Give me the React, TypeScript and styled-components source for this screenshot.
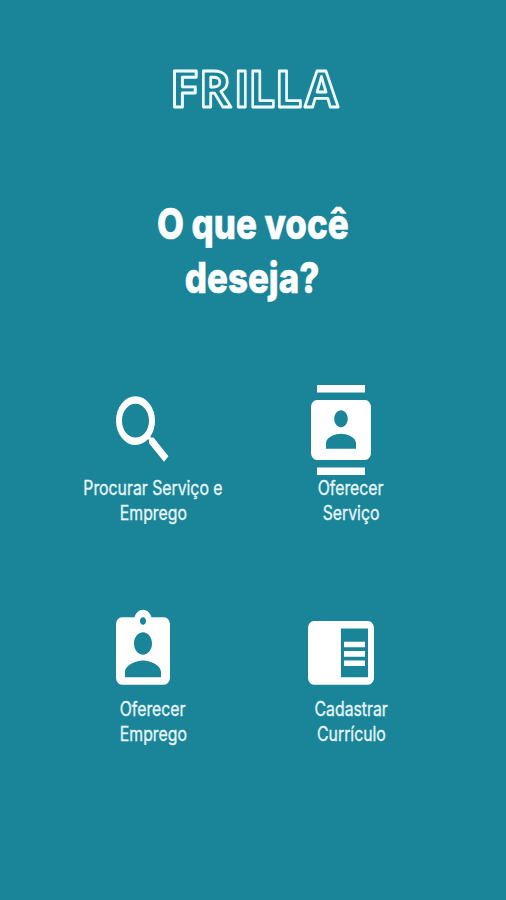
import React from "react";
import styled, { createGlobalStyle } from "styled-components";
import type { IconType } from "react-icons";
import { MdSearch, MdContacts, MdAssignmentInd, MdChromeReaderMode } from "react-icons/md";

const GlobalStyle = createGlobalStyle`
  body {
    margin: 0;
    background: #1a8599;
  }
`;

const Screen = styled.main`
  box-sizing: border-box;
  width: 506px;
  height: 900px;
  padding-top: 44px;
  display: flex;
  flex-direction: column;
  align-items: center;
  overflow: hidden;
  background: #1a8599;
  color: #fff;
  font-family: Inter, "Liberation Sans", sans-serif;
`;

const Logo = styled.svg`
  display: block;
  width: 186px;
  height: 86px;
  margin-left: 6px;
  overflow: visible;
  fill: none;
  stroke: #eefaff;
  stroke-width: 2.8px;
  stroke-linejoin: round;
  font: 700 50.5px "Open Sans", sans-serif;
`;

const Heading = styled.h1`
  margin: 67px 1px 0 0;
  display: flex;
  flex-direction: column;
  align-items: center;
  font-size: 42.5px;
  font-weight: 800;
  line-height: 54px;
  white-space: nowrap;
  -webkit-text-stroke: 0.6px #fff;
`;

const Squeezed = styled.span<{ $x: number }>`
  display: block;
  transform: scaleX(${(p) => p.$x});
`;

const Options = styled.nav`
  display: grid;
  grid-template-columns: 198px 198px;
  grid-auto-rows: 221px;
  margin-top: 80px;
  margin-right: 2px;
`;

const Option = styled.a`
  display: flex;
  flex-direction: column;
  align-items: center;
  color: inherit;
`;

const IconBox = styled.div`
  width: 72px;
  height: 90px;
  margin-right: 20px;

  svg {
    display: block;
    width: 100%;
    height: 100%;
  }
`;

const Label = styled.div`
  display: flex;
  flex-direction: column;
  align-items: center;
  margin-top: 1px;
  font-size: 19.5px;
  font-weight: 400;
  line-height: 25.3px;
  white-space: nowrap;
  color: #e6f5f8;
  -webkit-text-stroke: 0.35px #e6f5f8;
`;

const letters = [
  { char: "F", x: 6.8, scale: 1.05 },
  { char: "R", x: 36, scale: 0.96 },
  { char: "I", x: 71, scale: 0.93 },
  { char: "L", x: 85.6, scale: 0.93 },
  { char: "L", x: 111.9, scale: 0.95 },
  { char: "A", x: 141.8, scale: 0.96 },
];

const options: { icon: IconType; lines: string[] }[] = [
  { icon: MdSearch, lines: ["Procurar Serviço e", "Emprego"] },
  { icon: MdContacts, lines: ["Oferecer", "Serviço"] },
  { icon: MdAssignmentInd, lines: ["Oferecer", "Emprego"] },
  { icon: MdChromeReaderMode, lines: ["Cadastrar", "Currículo"] },
];

export default function App() {
  return (
    <>
      <GlobalStyle />
      <Screen>
        <Logo viewBox="0 0 186 86" aria-label="Frilla">
          {letters.map((l, i) => (
            <text key={i} transform={`translate(${l.x} 62.5) scale(${l.scale} 1)`}>
              {l.char}
            </text>
          ))}
        </Logo>
        <Heading>
          <Squeezed $x={0.82}>O que você</Squeezed>
          <Squeezed $x={0.82}>deseja?</Squeezed>
        </Heading>
        <Options>
          {options.map(({ icon: Icon, lines }) => (
            <Option key={lines.join(" ")}>
              <IconBox>
                <Icon preserveAspectRatio="none" />
              </IconBox>
              <Label>
                {lines.map((line) => (
                  <Squeezed key={line} $x={0.81}>
                    {line}
                  </Squeezed>
                ))}
              </Label>
            </Option>
          ))}
        </Options>
      </Screen>
    </>
  );
}
